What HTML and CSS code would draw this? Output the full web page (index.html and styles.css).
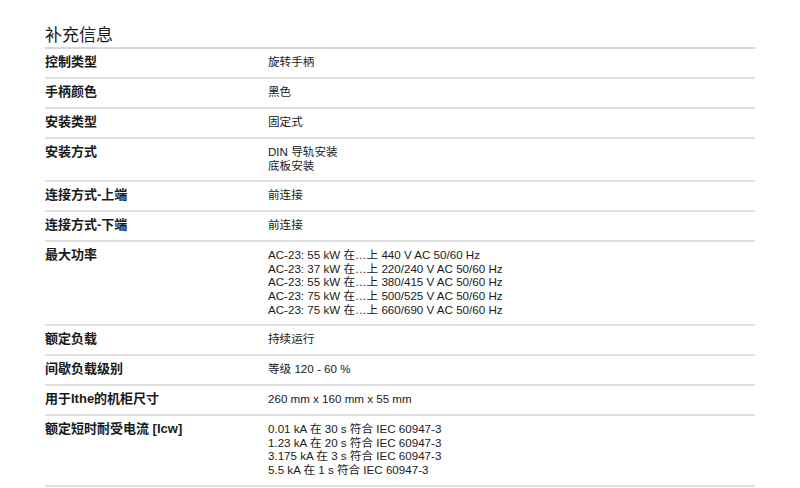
FILE: index.html
```html
<!DOCTYPE html>
<html lang="zh-CN">
<head>
<meta charset="utf-8">
<link rel="stylesheet" href="styles.css">
</head>
<body>
<section class="info">
  <h2 class="title">补充信息</h2>
  <div class="row"><div class="label">控制类型</div><div class="value">旋转手柄</div></div>
  <div class="row"><div class="label">手柄颜色</div><div class="value">黑色</div></div>
  <div class="row"><div class="label">安装类型</div><div class="value">固定式</div></div>
  <div class="row"><div class="label">安装方式</div><div class="value">DIN 导轨安装<br>底板安装</div></div>
  <div class="row"><div class="label">连接方式-上端</div><div class="value">前连接</div></div>
  <div class="row"><div class="label">连接方式-下端</div><div class="value">前连接</div></div>
  <div class="row"><div class="label">最大功率</div><div class="value">AC-23: 55 kW 在…上 440 V AC 50/60 Hz<br>AC-23: 37 kW 在…上 220/240 V AC 50/60 Hz<br>AC-23: 55 kW 在…上 380/415 V AC 50/60 Hz<br>AC-23: 75 kW 在…上 500/525 V AC 50/60 Hz<br>AC-23: 75 kW 在…上 660/690 V AC 50/60 Hz</div></div>
  <div class="row"><div class="label">额定负载</div><div class="value">持续运行</div></div>
  <div class="row"><div class="label">间歇负载级别</div><div class="value">等级 120 - 60 %</div></div>
  <div class="row"><div class="label">用于Ithe的机柜尺寸</div><div class="value">260 mm x 160 mm x 55 mm</div></div>
  <div class="row"><div class="label">额定短时耐受电流 [Icw]</div><div class="value">0.01 kA 在 30 s 符合 IEC 60947-3<br>1.23 kA 在 20 s 符合 IEC 60947-3<br>3.175 kA 在 3 s 符合 IEC 60947-3<br>5.5 kA 在 1 s 符合 IEC 60947-3</div></div>
</section>
</body>
</html>
```
FILE: styles.css
```css
html, body {
  margin: 0;
  padding: 0;
  background: #fff;
}
body {
  font-family: "Liberation Sans", "Noto Sans CJK SC", sans-serif;
  color: #1a1a1a;
}
.info {
  width: 710px;
  padding: 25px 0 0 45px;
}
.title {
  margin: 0;
  font-size: 17px;
  font-weight: 400;
  line-height: 22px;
  border-bottom: 2px solid #d8d8d8;
}
.row {
  display: grid;
  grid-template-columns: 223px 1fr;
  padding: 6px 0 8px;
  border-bottom: 2px solid #dedede;
}
.label {
  font-size: 13px;
  font-weight: 700;
  line-height: 14px;
}
.value {
  font-size: 11.6px;
  line-height: 13.6px;
}
```
